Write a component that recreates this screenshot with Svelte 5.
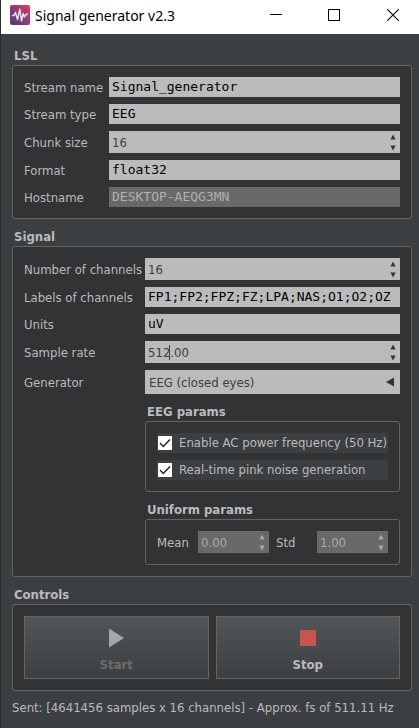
<script>
  let streamName = $state('Signal_generator');
  let streamType = $state('EEG');
  let chunkSize = $state('16');
  let format = $state('float32');
  let hostname = $state('DESKTOP-AEQG3MN');
  let channels = $state('16');
  let labels = $state('FP1;FP2;FPZ;FZ;LPA;NAS;O1;O2;OZ');
  let units = $state('uV');
  let sampleRate = $state('512.00');
  let acPower = $state(true);
  let pinkNoise = $state(true);
  let mean = $state('0.00');
  let std = $state('1.00');
</script>

{#snippet arrows(name, disabled)}
  <span class="arrows">
    <button type="button" aria-label="Increase {name}" {disabled}>
      <svg width="6" height="6" viewBox="0 0 6 6"><path d="M3 0.5 5.6 5.5H0.4z" fill="currentColor" /></svg>
    </button>
    <button type="button" aria-label="Decrease {name}" {disabled}>
      <svg width="6" height="6" viewBox="0 0 6 6"><path d="M3 5.5 5.6 0.5H0.4z" fill="currentColor" /></svg>
    </button>
  </span>
{/snippet}

<div class="window">
  <header>
    <svg class="logo" width="20" height="20" viewBox="0 0 20 20" aria-hidden="true">
      <defs>
        <linearGradient id="logo-fill" x1="0" y1="1" x2="1" y2="0">
          <stop offset="0" stop-color="#3d3f86" />
          <stop offset="0.5" stop-color="#8a3c78" />
          <stop offset="1" stop-color="#e83a58" />
        </linearGradient>
      </defs>
      <rect width="20" height="20" rx="2" fill="url(#logo-fill)" />
      <path
        d="M2.5 10.5H4L5.5 7.5 7.5 14.5 9.8 4.2 11.5 16 13.2 8.5 14.5 12 16 9.5 17.5 9.2"
        fill="none" stroke="#f6e6f2" stroke-width="1.4" stroke-linejoin="round" stroke-linecap="round" />
    </svg>
    <h1>Signal generator v2.3</h1>
    <button type="button" aria-label="Minimize">
      <svg width="12" height="12" viewBox="0 0 12 12"><path d="M0 5.5H12" stroke="#000" /></svg>
    </button>
    <button type="button" aria-label="Maximize">
      <svg width="12" height="12" viewBox="0 0 12 12"><rect x="0.5" y="0.5" width="11" height="11" fill="none" stroke="#000" /></svg>
    </button>
    <button type="button" aria-label="Close">
      <svg width="12" height="12" viewBox="0 0 12 12"><path d="M0.3 0.3 11.7 11.7M11.7 0.3 0.3 11.7" stroke="#000" stroke-width="1.1" /></svg>
    </button>
  </header>

  <main>
    <section>
      <h2>LSL</h2>
      <div class="box form lsl">
        <label for="stream-name">Stream name</label>
        <input id="stream-name" class="text" bind:value={streamName} spellcheck="false" />
        <label for="stream-type">Stream type</label>
        <input id="stream-type" class="text" bind:value={streamType} spellcheck="false" />
        <label for="chunk-size">Chunk size</label>
        <div class="spin">
          <input id="chunk-size" bind:value={chunkSize} />
          {@render arrows('chunk size', false)}
        </div>
        <label for="format">Format</label>
        <input id="format" class="text" bind:value={format} spellcheck="false" />
        <label for="hostname">Hostname</label>
        <input id="hostname" class="text" bind:value={hostname} disabled />
      </div>
    </section>

    <section>
      <h2>Signal</h2>
      <div class="box form signal">
        <label for="channels">Number of channels</label>
        <div class="spin">
          <input id="channels" bind:value={channels} />
          {@render arrows('number of channels', false)}
        </div>
        <label for="labels">Labels of channels</label>
        <input id="labels" class="text" bind:value={labels} spellcheck="false" />
        <label for="units">Units</label>
        <input id="units" class="text" bind:value={units} spellcheck="false" />
        <label for="sample-rate">Sample rate</label>
        <div class="spin">
          <input id="sample-rate" bind:value={sampleRate} />
          <span class="caret"></span>
          {@render arrows('sample rate', false)}
        </div>
        <label for="generator">Generator</label>
        <div class="combo">
          <select id="generator">
            <option>EEG (closed eyes)</option>
          </select>
          <svg width="8" height="10" viewBox="0 0 8 10" aria-hidden="true"><path d="M8 0.5V9.5L0 5z" fill="#333435" /></svg>
        </div>

        <div class="params">
          <h2>EEG params</h2>
          <div class="box checks">
            <label><input type="checkbox" bind:checked={acPower} />Enable AC power frequency (50 Hz)</label>
            <label><input type="checkbox" bind:checked={pinkNoise} />Real-time pink noise generation</label>
          </div>
          <h2>Uniform params</h2>
          <div class="box uniform">
            <label for="mean">Mean</label>
            <div class="spin off">
              <input id="mean" bind:value={mean} disabled />
              {@render arrows('mean', true)}
            </div>
            <label for="std">Std</label>
            <div class="spin off">
              <input id="std" bind:value={std} disabled />
              {@render arrows('std', true)}
            </div>
          </div>
        </div>
      </div>
    </section>

    <section>
      <h2>Controls</h2>
      <div class="box controls">
        <button type="button" disabled>
          <svg width="20" height="20" viewBox="0 0 20 20" aria-hidden="true"><path d="M3 0.5 18 10 3 19.5z" fill="#a6a7a8" /></svg>
          Start
        </button>
        <button type="button">
          <svg width="20" height="20" viewBox="0 0 20 20" aria-hidden="true"><rect x="2" y="2" width="16" height="16" fill="#c75450" /></svg>
          Stop
        </button>
      </div>
    </section>

    <p role="status">Sent: [4641456 samples x 16 channels] - Approx. fs of 511.11 Hz</p>
  </main>
</div>

<style>
  :global(body) {
    margin: 0;
    background: #3c3f41;
  }

  .window {
    box-sizing: border-box;
    min-height: 100vh;
    border-left: 1px solid #2b2d2f;
    background: #3c3f41;
    color: #bbbbbb;
    font: 13px/20px 'DejaVu Sans Condensed', 'Noto Sans', sans-serif;
  }

  header {
    display: flex;
    align-items: center;
    height: 34px;
    padding-left: 9px;
    background: #fff;
    color: #000;
  }

  .logo {
    flex: none;
    margin-top: -4px;
  }

  h1 {
    flex: 1;
    margin: 0 0 2px 5px;
    font: 14px/20px 'Noto Sans', sans-serif;
    white-space: nowrap;
  }

  header button {
    display: flex;
    justify-content: center;
    width: 58px;
    margin-bottom: 4px;
    padding: 0;
    border: 0;
    background: none;
  }

  header button:last-child {
    width: 60px;
    margin-right: -4px;
  }

  main {
    padding: 4px 7px 0 11px;
  }

  h2 {
    height: 18px;
    margin: 0;
    padding: 9px 0 0 2px;
    font: bold 13px/18px 'DejaVu Sans Condensed', 'Noto Sans', sans-serif;
  }

  .box {
    border: 1px solid #646464;
    border-radius: 3px;
    padding: 11px;
    background: #313335;
  }

  .form {
    display: grid;
    row-gap: 7px;
    align-items: center;
  }

  .lsl {
    grid-template-columns: 85px minmax(0, 1fr);
  }

  .signal {
    grid-template-columns: 121px minmax(0, 1fr);
  }

  label {
    padding-top: 2px;
    line-height: 18px;
    white-space: nowrap;
  }

  input,
  select {
    box-sizing: border-box;
    width: 100%;
    min-width: 0;
    margin: 0;
    border: 0;
    border-radius: 0;
    outline: 0;
    background: #bbbbbb;
    color: #3c3f41;
    font: inherit;
  }

  .text {
    height: 20px;
    padding: 0 3px;
    color: #000;
    font: 13px/20px 'DejaVu Sans Mono', monospace;
  }

  .text:disabled {
    background: #696969;
    color: #b0b0b0;
  }

  .spin {
    position: relative;
    display: flex;
    height: 22px;
    background: #bbbbbb;
    color: #333435;
  }

  .spin input {
    height: 22px;
    padding: 0 0 0 3px;
    background: transparent;
  }

  .arrows {
    display: flex;
    flex: none;
    flex-direction: column;
    width: 15px;
  }

  .arrows button {
    display: flex;
    align-items: center;
    justify-content: center;
    height: 11px;
    padding: 0;
    border: 0;
    background: none;
    color: inherit;
  }

  .spin.off {
    background: #696969;
    color: #a8a8a8;
  }

  .off input {
    color: #a8a8a8;
  }

  .caret {
    position: absolute;
    top: 4px;
    left: 24px;
    width: 1px;
    height: 15px;
    background: #3c3f41;
  }

  .combo {
    position: relative;
    height: 24px;
  }

  .combo select {
    height: 24px;
    padding: 1px 20px 0 4px;
    appearance: none;
  }

  .combo svg {
    position: absolute;
    top: 7px;
    right: 6px;
    pointer-events: none;
  }

  .params {
    grid-column: 2;
    margin-top: -7px;
  }

  .checks {
    display: grid;
    gap: 7px;
  }

  .checks label {
    display: flex;
    align-items: center;
    height: 20px;
    padding: 0 0 0 1px;
    background: #3c3f41;
    line-height: 20px;
  }

  .checks input {
    flex: none;
    width: 14px;
    height: 14px;
    margin-right: 7px;
    appearance: none;
    background: #fff;
  }

  .checks input:checked {
    background: #fff
      url("data:image/svg+xml,%3Csvg xmlns='http://www.w3.org/2000/svg' viewBox='0 0 14 14'%3E%3Cpath d='M2 7 5.3 10.5 12 3.5' fill='none' stroke='%23222' stroke-width='1.4'/%3E%3C/svg%3E");
  }

  .uniform {
    display: grid;
    grid-template-columns: 34px 1fr 34px 1fr;
    gap: 7px;
    align-items: center;
  }

  .controls {
    display: grid;
    grid-template-columns: 1fr 1fr;
    gap: 7px;
  }

  .controls button {
    display: flex;
    flex-direction: column;
    align-items: center;
    gap: 7px;
    height: 63px;
    padding: 11px 0 0;
    border: 1px solid #646464;
    background: linear-gradient(#525658, #3c3f41);
    color: #bbbbbb;
    font: bold 13px/20px 'DejaVu Sans Condensed', 'Noto Sans', sans-serif;
  }

  .controls button:disabled {
    color: #6c6c6c;
  }

  p {
    margin: 7px 0 0;
  }
</style>
